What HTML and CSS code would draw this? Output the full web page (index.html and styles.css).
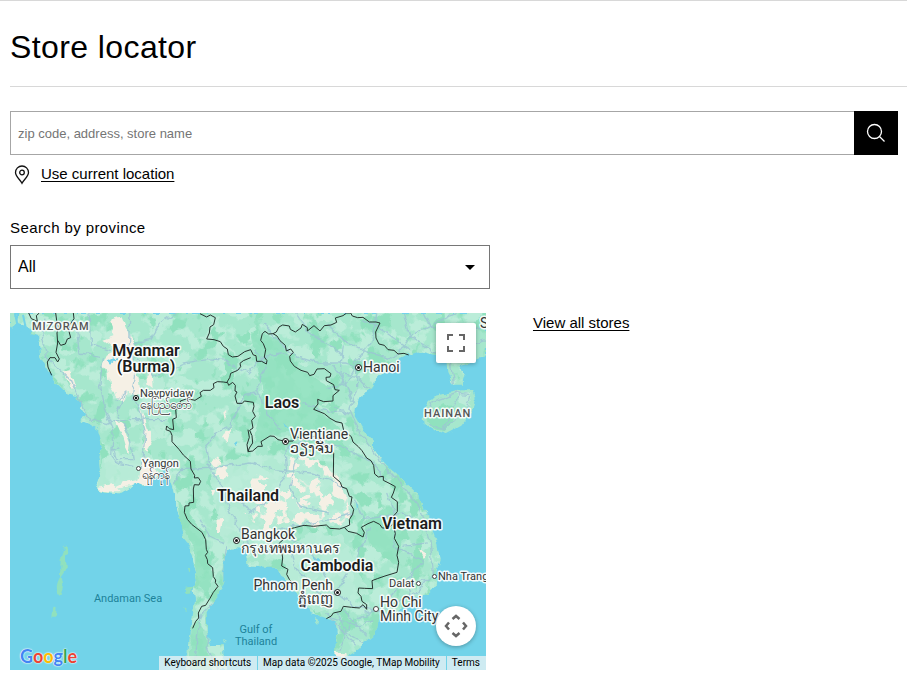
FILE: index.html
```
<!DOCTYPE html>
<html lang="en">
<head>
    <meta charset="UTF-8">
    <meta name="viewport" content="width=device-width, initial-scale=1.0">
    <title>Store locator</title>
    <link rel="stylesheet" href="styles.css">
</head>
<body>
    <main class="locator">
        <header class="page-header">
            <h1>Store locator</h1>
        </header>

        <form class="search-form">
            <input type="text" class="search-input" placeholder="zip code, address, store name" aria-label="zip code, address, store name">
            <button type="submit" class="search-button" aria-label="Search">
                <svg width="20" height="20" viewBox="0 0 20 20" fill="none" stroke="#fff" stroke-width="1.3">
                    <circle cx="8.500" cy="8.500" r="7"/>
                    <path d="M13.500 13.500L18.500 18.500"/>
                </svg>
            </button>
        </form>

        <div class="current-location">
            <svg width="16" height="20" viewBox="0 0 16 20" fill="none" stroke="#111" stroke-width="1.3">
                <path d="M8 18.200C6.500 15 1.500 11.500 1.500 7.500a6.500 6.500 0 0 1 13 0C14.500 11.500 9.500 15 8 18.200z"/>
                <circle cx="8" cy="7.500" r="2.300"/>
            </svg>
            <a href="#">Use current location</a>
        </div>

        <div class="province">
            <label for="province">Search by province</label>
            <div class="select-wrap">
                <select id="province">
                    <option>All</option>
                </select>
            </div>
        </div>

        <div class="results">
            <div class="map">
                <svg class="map-canvas" viewBox="0 0 476 357" preserveAspectRatio="xMinYMin slice">
                    <defs>
                        <filter id="rough" x="0" y="0" width="100%" height="100%">
                            <feTurbulence type="fractalNoise" baseFrequency="0.12" numOctaves="2" seed="4"/>
                            <feDisplacementMap in="SourceGraphic" scale="7" xChannelSelector="R" yChannelSelector="G"/>
                        </filter>
                        <filter id="forest" x="0" y="0" width="100%" height="100%" color-interpolation-filters="sRGB">
                            <feTurbulence type="fractalNoise" baseFrequency="0.07 0.05" numOctaves="3" seed="11"/>
                            <feColorMatrix values="0 0 0 0 0.565  0 0 0 0 0.882  0 0 0 0 0.745  12 0 0 0 -6.7"/>
                        </filter>
                        <filter id="meadow" x="0" y="0" width="100%" height="100%" color-interpolation-filters="sRGB">
                            <feTurbulence type="fractalNoise" baseFrequency="0.05 0.06" numOctaves="3" seed="23"/>
                            <feColorMatrix values="0 0 0 0 0.733  0 0 0 0 0.929  0 0 0 0 0.851  0 12 0 0 -5.8"/>
                        </filter>
                        <filter id="patchy" x="0" y="0" width="100%" height="100%" color-interpolation-filters="sRGB">
                            <feTurbulence type="fractalNoise" baseFrequency="0.09" numOctaves="2" seed="7"/>
                            <feColorMatrix values="0 0 0 0 0  0 0 0 0 0  0 0 0 0 0  20 0 0 0 -10" result="patches"/>
                            <feComposite in="SourceGraphic" in2="patches" operator="in"/>
                        </filter>
                        <clipPath id="land-clip">
                            <path transform="scale(.33333)" d="M25 0L22 30 50 35 62 60 85 65 90 130 120 182 140 210 170 240 200 250 215 275 210 290 232 305 205 325 240 335 265 352 275 392 265 430 270 470 257 515 265 531 300 538 325 541 350 531 385 508 400 515 430 510 445 490 465 480 480 500 490 536 500 581 510 621 520 681 540 706 550 746 560 781 550 821 555 861 545 931 535 981 530 1071 650 1071 640 996 600 996 590 951 590 901 605 876 620 851 640 801 640 751 650 716 675 706 703 706 709 756 764 761 794 761 814 781 834 811 864 841 894 876 904 901 924 906 949 916 979 926 984 961 976 1001 976 1031 1004 1036 1044 1011 1064 986 1099 961 1099 931 1114 911 1164 896 1214 861 1254 841 1274 821 1279 781 1289 741 1279 681 1259 621 1239 571 1219 540 1184 505 1144 470 1114 440 1089 405 1089 380 1059 350 1034 310 1039 280 1059 240 1094 220 1099 190 1134 170 1164 140 1194 125 1234 115 1274 125 1310 150 1312 180 1329 215 1359 215 1364 190 1346 160 1394 140 1428 130 1428 0z"/>
                        </clipPath>
                    </defs>

                    <rect width="476" height="357" fill="#72d3e9"/>

                    <!-- land -->
                    <g filter="url(#rough)">
                        <g clip-path="url(#land-clip)">
                            <rect width="476" height="357" fill="#a6e7cd"/>
                            <rect width="476" height="357" filter="url(#meadow)"/>
                            <rect width="476" height="357" filter="url(#forest)"/>
                            <g transform="scale(.33333)" fill="#90e1be" opacity=".8">
                                <path d="M232 330L262 355 290 420 280 520 262 520 275 440 272 380z"/>
                                <path d="M500 560L530 590 590 670 610 790 590 850 560 800 550 700 515 640z"/>
                                <path d="M720 60L800 70 850 160 960 220 970 260 910 280 990 350 1010 420 900 350 800 360 730 390 760 240z"/>
                                <path d="M1060 630L1140 580 1180 660 1160 760 1080 700z"/>
                                <path d="M540 940L570 920 590 980 600 1071 545 1071z"/>
                            </g>
                            <path fill="#bcecda" opacity=".75" transform="scale(.33333)" d="M600 460L700 430 860 425 960 470 1020 540 1010 640 840 640 800 700 700 740 640 700 620 600zM810 720L900 660 1000 670 1040 760 1080 840 980 880 920 900 840 800zM280 440L400 410 500 480 490 540 250 540zM380 200L460 190 470 310 430 370z"/>
                            <g transform="scale(.33333)" fill="#f5f0e5">
                                <path d="M300 20L335 10 355 60 372 90 365 140 385 190 392 245 350 240 340 270 320 250 300 220 295 170 275 160 290 125 320 110 280 80 310 70z"/>
                                <path d="M315 320L340 335 360 390 355 420 345 400 335 365z"/>
                                <path d="M385 270L405 320 425 380 413 420 398 400 405 350z"/>
                                <path d="M400 430L420 460 450 480 430 510 385 515 300 530 340 510 385 500zM260 525L310 515 330 535 280 535z"/>
                                <path d="M412 185L425 180 428 225 415 215zM165 175L180 172 195 220 185 225 165 190z"/>
                                <path d="M655 350L665 340 650 390 640 375zM640 290L650 300 645 325zM600 450L630 435 625 460z"/>
                                <path d="M620 620L640 617 630 660 618 660zM600 531L620 530 610 552zM1225 705L1250 720 1240 735z"/>
                                <path d="M976 1010L1010 1030 976 1040z"/>
                            </g>
                            <g filter="url(#patchy)">
                                <path transform="scale(.33333)" fill="#f5f0e5" d="M840 430L900 420 960 470 1015 530 1020 630 960 640 830 640 780 660 700 600 720 470 790 500 830 520zM610 440L660 470 640 500 600 480z"/>
                            </g>
                            <g transform="scale(.33333)" fill="#72d3e9">
                                <path d="M900 725L925 735 940 750 915 745zM1035 575L1045 580 1038 595zM820 330L835 345 825 345zM440 440L480 470 460 480zM290 145L330 130 300 155zM675 390L685 385 682 402z"/>
                            </g>
                            <!-- roads -->
                            <g class="roads" transform="scale(.33333)">
                                <path d="M240 0L245 95 300 110 355 100 360 0M360 100L375 180 365 240 390 290 405 350 400 430 390 470"/>
                                <path d="M280 130L270 210 285 290 310 350 305 430 320 450 370 460M320 260L345 240 320 300 360 370 370 440 320 440 310 410 330 400"/>
                                <path d="M105 20L95 60 110 130 180 200 240 320 290 335 330 320 400 320 470 320"/>
                                <path d="M375 140L430 190 520 150 590 140 650 145 714 180 760 130 830 120"/>
                                <path d="M370 90L420 80 450 30 500 0M200 60L210 120 270 130M490 520L510 470 620 465 720 450 790 470 900 480 960 500 1010 530"/>
                                <path d="M600 460L590 400 620 360 660 340 700 250 740 240M590 450L640 530 660 600 690 640 700 690M640 690L600 670 570 620"/>
                                <path d="M690 560L720 600 760 570 800 540 830 480 825 410 880 385M700 690L770 660 850 640 960 620 1030 600M650 700L640 770 645 830 600 880 570 910 560 990 545 1071M600 910L590 1000 620 1071"/>
                                <path d="M760 30L810 90 860 130 920 150 1000 150 1040 160 1040 230 1020 290 1050 360 1100 430 1170 510 1230 580 1260 680 1270 780 1220 840 1120 890 1060 900"/>
                                <path d="M860 0L900 60 950 90 1000 130M950 30L1000 80 1080 120 1150 140 1200 70 1260 40 1330 60 1428 40M1060 20L1130 60 1200 110M1100 0L1090 80 1030 150M1180 0L1200 70 1280 120M1240 0L1260 40 1340 0"/>
                                <path d="M980 180L1040 190 1080 230M950 230L1010 210 1050 140M970 280L1020 300 930 290 880 270M1000 100L990 180 1020 240M1040 160L1100 180M970 160L1010 220 1030 270"/>
                                <path d="M900 370L860 440 840 520 870 580 960 600M900 380L990 400 1090 450 1130 500M1030 560L1060 620 1180 600 1230 630M1130 540L1160 620 1150 700 1240 740 1190 800 1200 850 1120 890"/>
                                <path d="M830 670L900 710 970 830 1030 880 1090 890M840 700L860 770 940 850M980 830L1040 730 1080 640M980 840L890 870M1180 700L1250 690M1160 650L1260 640M1130 860L1170 820 1260 800"/>
                                <path d="M980 900L1010 960 1060 990M1000 890L1070 970M960 910L1040 940 1090 920M990 1010L1020 930 1080 900M950 900L1040 1000"/>
                                <path d="M730 110L770 150 740 230 770 300 810 350M1320 140L1330 210M1360 100L1428 80"/>
                            </g>
                        </g>

                        <g transform="scale(.33333)">
                            <path fill="#a6e7cd" d="M1239 300L1249 275 1274 250 1314 240 1354 232 1389 232 1397 255 1382 300 1354 335 1304 362 1269 350 1244 335z"/>
                            <path fill="#90e1be" d="M1244 310L1300 270 1340 290 1330 330 1300 355 1265 345z"/>
                            <path fill="#bcecda" d="M1340 240L1385 240 1375 280 1350 270z"/>
                            <path class="roads" d="M1250 300L1270 265 1340 240 1380 245 1365 300 1300 350 1250 330M1350 240L1320 300 1300 350"/>
                            <path fill="#90e1be" d="M162 700L170 698 172 725 165 735 168 770 155 790 160 815 148 850 140 825 150 790 152 740zM130 885L140 884 138 908 127 908zM530 760L540 765 535 780zM525 825L550 820 545 835 525 838zM522 885L530 890 528 897z"/>
                            <path fill="#a6e7cd" d="M916 915L924 920 922 940 914 930zM0 0L15 0 20 25 8 50 0 40zM642 975L650 980 645 987z"/>
                        </g>
                    </g>
                    <path fill="none" stroke="#72d3e9" stroke-width="2" d="M5 0l2 10 5 8M13 2l3 14M0 22l7-2"/>

                    <!-- country borders -->
                    <g class="borders" transform="scale(.33333)">
                        <path d="M56 0L64 17 82 25 79 8 88 0M137 0L140 22 145 45 141 60 143 90 138 118 148 138 143 147 135 134 120 134 112 147 114 162 125 187M143 82L152 97 166 93 172 78 182 74 177 55 179 36 192 17 190 0"/>
                        <path d="M570 2L590 12 601 6 616 14 611 35 600 42 598 60 590 78 612 80 631 86 640 100 652 108 655 125 667 132 684 130 704 116 722 110 730 126 738 128 740 145 755 145 769 153 771 143 763 132 767 110 760 92 752 82 757 62 765 55 776 63 789 62"/>
                        <path d="M722 134L700 143 690 151 692 161 683 172 662 181 659 194 650 209M714 350L718 373 711 395 714 415"/>
                        <path d="M640 207L622 206 610 212 612 224 601 232 580 232 570 239 574 250 555 262 532 257 511 264 510 284 497 289 499 314 488 319 491 350 478 347 470 339 468 350 481 355 486 367 486 386 507 409 520 426 541 445 543 468 554 487 553 495 565 494 572 505 567 516 553 515 550 528 551 568 537 570 537 578 525 579 523 598 532 619 545 634 576 658 587 680 589 709 593 718 586 727 592 740 593 752 608 764 610 791 617 801 616 809 624 820 610 838 600 856 587 877 575 880 565 900 566 915 557 925 548 946"/>
                        <path d="M640 207L653 209 656 217 668 208 676 217 675 234 681 237 675 249 681 271 697 271 703 264 730 268 732 280 728 295 736 310 725 322 729 345 719 352 726 368 728 390 718 405 714 416 728 414 744 400 757 400 753 386 780 369 792 370 804 380 826 385 849 384 862 372 880 378 914 370 930 380 938 394 957 402 971 421 970 490 991 508 996 522 1010 527 1018 550 1026 552 1022 575 1031 589 1028 604 1018 620 1019 636 1003 643"/>
                        <path d="M789 62L799 57 807 42 818 36 838 39 841 49 856 57 873 45 877 34 892 44 892 54 912 38 930 54 943 38 963 36 980 28 976 15 999 8 1010 0 1022 0 1027 9 1043 14 1059 13 1078 27 1098 27 1110 30 1097 57 1098 75 1107 93 1123 97 1134 110 1152 112 1164 123 1182 121 1196 126"/>
                        <path d="M789 62L801 69 810 83 826 97 829 114 842 108 850 118 839 130 841 144 853 160 873 172 893 178 899 188 912 184 921 168 943 167 963 182 960 192 948 193 949 203 971 215 975 230 988 232 969 248 969 264 941 266 923 259 924 273 911 289 943 302 960 316 978 326 996 330 1001 352 1024 371 1029 387 1045 401 1056 413 1070 435 1083 443 1091 457 1094 483 1105 492 1120 490 1120 502 1140 512 1156 521 1150 540 1144 553 1162 566 1162 596 1149 611 1149 633 1156 662 1153 676 1166 700 1161 727 1166 748 1161 778 1125 789 1102 797 1086 803 1088 827 1064 826 1046 825 1044 840 1053 850 1056 865 1070 875 1070 889 1059 875 1048 885 1025 883 1000 880 993 895 970 900 964 909 949 917"/>
                        <path d="M1003 643L989 648 960 646 949 636 910 640 882 637 854 644 836 649 832 670 808 690 807 708 816 722 818 735 815 759 834 769 830 784 838 799 858 821M1003 643L1014 655 1040 661 1059 672 1063 658 1054 643 1074 632 1091 625 1109 634 1117 645 1135 645 1149 633"/>
                    </g>

                    <!-- place markers -->
                    <g class="capital">
                        <circle cx="126" cy="85" r="2.500"/><circle cx="348.500" cy="54.500" r="3"/><circle cx="275.500" cy="128.500" r="3"/>
                        <circle cx="226.500" cy="227.500" r="3"/><circle cx="327.500" cy="279.500" r="3"/>
                    </g>
                    <g class="capital-dot">
                        <circle cx="126" cy="85" r="1.200"/><circle cx="348.500" cy="54.500" r="1.500"/><circle cx="275.500" cy="128.500" r="1.500"/>
                        <circle cx="226.500" cy="227.500" r="1.500"/><circle cx="327.500" cy="279.500" r="1.500"/>
                    </g>
                    <g class="town">
                        <circle cx="128.500" cy="155.500" r="2"/><circle cx="408.500" cy="270.500" r="2"/>
                        <circle cx="424.500" cy="263.500" r="2"/><circle cx="366" cy="296" r="2.500"/>
                    </g>

                    <!-- labels -->
                    <g class="country">
                        <text x="136" y="43">Myanmar</text>
                        <text x="136" y="59">(Burma)</text>
                        <text x="272" y="95">Laos</text>
                        <text x="238" y="188">Thailand</text>
                        <text x="402" y="216">Vietnam</text>
                        <text x="327" y="258">Cambodia</text>
                    </g>
                    <g class="region">
                        <text x="22" y="17">MIZORAM</text>
                        <text x="414" y="104">HAINAN</text>
                    </g>
                    <g class="city">
                        <text x="353" y="59">Hanoi</text>
                        <text x="280" y="126">Vientiane</text>
                        <text x="280" y="140">ວຽງຈັນ</text>
                        <text x="231" y="226">Bangkok</text>
                        <text x="231" y="240">กรุงเทพมหานคร</text>
                        <text x="323" y="277" text-anchor="end">Phnom Penh</text>
                        <text x="323" y="291" text-anchor="end">ភ្នំពេញ</text>
                        <text x="370" y="294">Ho Chi</text>
                        <text x="370" y="308">Minh City</text>
                        <text x="470" y="15">S</text>
                    </g>
                    <g class="city small">
                        <text x="130" y="84">Naypyidaw</text>
                        <text class="burmese" x="130" y="96">နေပြည်တော်</text>
                        <text x="132" y="154">Yangon</text>
                        <text class="burmese" x="132" y="166">ရန်ကုန်</text>
                        <text x="379" y="274">Dalat</text>
                        <text x="428" y="267">Nha Trang</text>
                    </g>
                    <g class="sea">
                        <text x="118" y="289">Andaman Sea</text>
                        <text x="246" y="320">Gulf of</text>
                        <text x="246" y="332">Thailand</text>
                    </g>
                </svg>

                <button type="button" class="map-button fullscreen" aria-label="Toggle fullscreen view">
                    <svg width="18" height="18" viewBox="0 0 18 18" fill="#666">
                        <path d="M0 0v6h2V2h4V0zM18 0h-6v2h4v4h2zM16 12v4h-4v2h6v-6zM2 12H0v6h6v-2H2z"/>
                    </svg>
                </button>
                <button type="button" class="map-button camera" aria-label="Map camera controls">
                    <svg width="24" height="24" viewBox="0 0 24 24" fill="none" stroke="#666" stroke-width="2.500">
                        <path d="M8.500 5L12 2l3.500 3M8.500 19l3.500 3 3.500-3M5 8.500L2 12l3 3.500M19 8.500l3 3.500-3 3.500"/>
                    </svg>
                </button>
                <a href="#" class="google" aria-label="Google"><span class="blue">G</span><span class="red">o</span><span class="yellow">o</span><span class="blue">g</span><span class="green">l</span><span class="red">e</span></a>
                <div class="map-footer">
                    <button type="button">Keyboard shortcuts</button>
                    <span>Map data ©2025 Google, TMap Mobility</span>
                    <a href="#">Terms</a>
                </div>
            </div>
            <div class="store-list">
                <a href="#">View all stores</a>
            </div>
        </div>
    </main>
</body>
</html>
```
FILE: styles.css
```
* {
    box-sizing: border-box;
}

body {
    margin: 0;
    border-top: 1px solid #d8d8d8;
    background: #fff;
    color: #000;
    font-family: "Liberation Sans", Arial, sans-serif;
    font-size: 15px;
}

a {
    color: #000;
    text-underline-offset: 2px;
}

.locator {
    padding-left: 10px;
}

.page-header {
    padding: 27px 0 19px;
    border-bottom: 1px solid #d8d8d8;
}

.page-header h1 {
    margin: 0;
    font-size: 32px;
    font-weight: 400;
    line-height: 39px;
    letter-spacing: 0.4px;
}

.search-form {
    display: flex;
    height: 44px;
    margin: 24px 9px 0 0;
}

.search-input {
    flex: 1;
    min-width: 0;
    padding: 0 7px;
    border: 1px solid #a6a6a6;
    border-right: 0;
    border-radius: 0;
    font-family: inherit;
    font-size: 13px;
}

.search-input::placeholder {
    color: #757575;
}

.search-button {
    display: flex;
    align-items: center;
    justify-content: center;
    width: 44px;
    padding: 0;
    border: 0;
    background: #000;
    cursor: pointer;
}

.current-location {
    display: flex;
    align-items: center;
    gap: 11px;
    height: 20px;
    margin-top: 10px;
    padding-left: 4px;
}

.current-location a {
    line-height: 18px;
    padding-bottom: 2px;
}

.province {
    max-width: 480px;
    margin-top: 34px;
}

.province label {
    display: block;
    line-height: 18px;
    letter-spacing: 0.4px;
}

.select-wrap {
    position: relative;
    margin-top: 8px;
}

.select-wrap::after {
    content: "";
    position: absolute;
    top: 20px;
    right: 15px;
    border: 5px solid transparent;
    border-top-color: #000;
    border-bottom: 0;
    pointer-events: none;
}

.select-wrap select {
    display: block;
    width: 100%;
    height: 44px;
    padding: 0 7px 2px;
    border: 1px solid #767676;
    border-radius: 0;
    background: #fff;
    color: #000;
    font-family: inherit;
    font-size: 16px;
    appearance: none;
}

.results {
    display: grid;
    grid-template-columns: 1.304fr 1fr;
    gap: 47px;
    margin: 24px 9px 16px 0;
}

.map {
    position: relative;
    height: 357px;
    overflow: hidden;
    background: #72d3e9;
    font-family: Roboto, sans-serif;
}

.map-canvas {
    display: block;
    width: 100%;
    height: 100%;
}

.roads {
    fill: none;
    stroke: #9cc4d4;
    stroke-width: 4px;
    stroke-linejoin: round;
    opacity: 0.8;
}

.borders {
    fill: none;
    stroke: #26332f;
    stroke-width: 3px;
    stroke-linejoin: round;
}

.capital {
    fill: #fff;
    stroke: #111;
    stroke-width: 1px;
}

.capital-dot {
    fill: #111;
}

.town {
    fill: #fff;
    stroke: #444;
    stroke-width: 1px;
}

.map-canvas text {
    paint-order: stroke;
    stroke: rgba(255, 255, 255, 0.9);
    stroke-width: 3px;
    stroke-linejoin: round;
}

.map-canvas .country {
    fill: #1c1c1c;
    font-size: 16px;
    font-weight: 600;
    text-anchor: middle;
}

.map-canvas .region {
    fill: #555;
    font-size: 11px;
    font-weight: 500;
    letter-spacing: 1px;
}

.map-canvas .city {
    fill: #333;
    font-size: 14px;
}

.map-canvas .small {
    font-size: 11px;
}

.map-canvas .burmese {
    font-size: 12px;
    stroke-width: 2px;
}

.map-canvas .sea text {
    fill: #1d8299;
    stroke: none;
    font-size: 11px;
    text-anchor: middle;
}

.map-button {
    position: absolute;
    right: 10px;
    display: flex;
    align-items: center;
    justify-content: center;
    width: 40px;
    height: 40px;
    padding: 0;
    border: 0;
    border-radius: 2px;
    background: #fff;
    box-shadow: 0 1px 4px rgba(0, 0, 0, 0.3);
    cursor: pointer;
}

.fullscreen {
    top: 10px;
}

.camera {
    bottom: 24px;
    border-radius: 50%;
}

.google {
    position: absolute;
    bottom: 3px;
    left: 10px;
    font-family: Lato, sans-serif;
    font-size: 18px;
    font-weight: 700;
    line-height: 22px;
    text-decoration: none;
    text-shadow: 0 0 1px #fff, 0 0 1px #fff, 0 0 2px #fff;
}

.blue {
    color: #4285f4;
}

.red {
    color: #ea4335;
}

.yellow {
    color: #fbbc04;
}

.green {
    color: #34a853;
}

.map-footer {
    position: absolute;
    right: 0;
    bottom: 0;
    display: flex;
    color: #000;
    font-size: 10px;
    line-height: 14px;
    white-space: nowrap;
}

.map-footer > * {
    padding: 0 6px 0 5px;
    border: 0;
    background: rgba(245, 245, 245, 0.7);
    color: inherit;
    font: inherit;
    text-decoration: none;
}

.map-footer > * + * {
    border-left: 1px solid #72d3e9;
}

.store-list {
    line-height: 20px;
}
```
